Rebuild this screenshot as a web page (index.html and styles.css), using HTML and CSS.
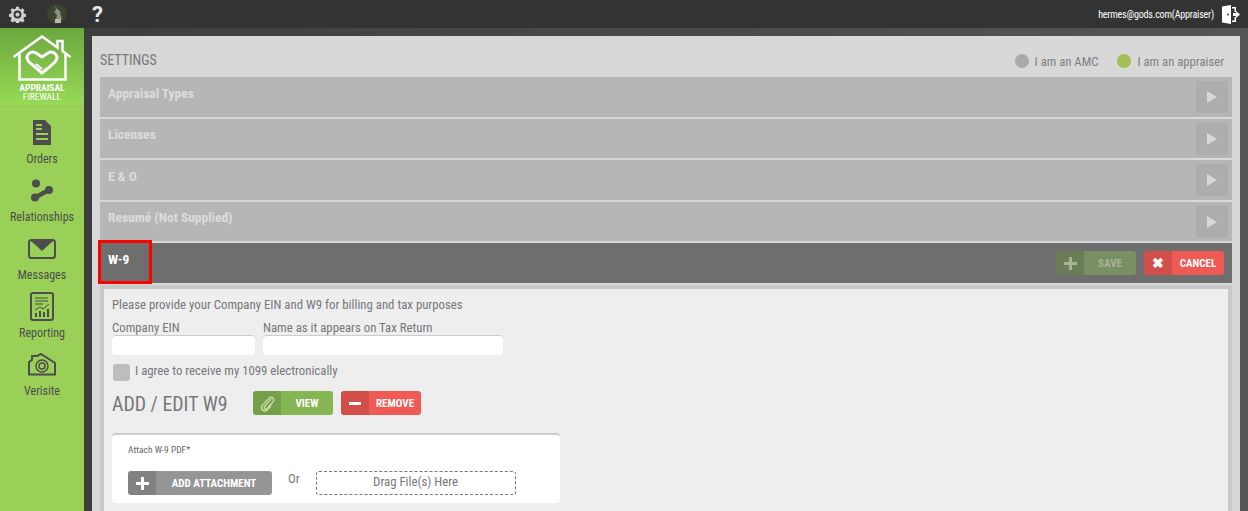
FILE: index.html
```html
<!DOCTYPE html>
<html lang="en">
<head>
    <meta charset="UTF-8">
    <title>Settings</title>
    <link rel="stylesheet" href="styles.css">
</head>
<body>
<header class="topbar">
    <svg class="top-gear" viewBox="0 0 24 24" width="17" height="17"><path fill="#d0d0d0" fill-rule="evenodd" d="M10 1h4l.6 3 2 .9 2.600-1.700 2.800 2.800-1.700 2.600.9 2 3 .6v4l-3 .6-.9 2 1.700 2.600-2.800 2.800-2.600-1.700-2 .9-.6 3h-4l-.6-3-2-.9-2.600 1.700-2.800-2.800 1.700-2.600-.9-2-3-.6v-4l3-.6.9-2L2 5.800 4.800 3l2.600 1.700 2-.9zM12 6.500a5.500 5.500 0 1 0 0 11 5.500 5.500 0 0 0 0-11zm0 2.500a3 3 0 1 1 0 6 3 3 0 0 1 0-6z"/></svg>
    <svg class="top-avatar" viewBox="0 0 20 20" width="20" height="20"><circle cx="10" cy="10" r="10" fill="#3a4630"/><path fill="#8f8f86" d="M8 2l2 3 3 2 1 5 1 3H9l1-4-3-3 2-2z"/><path fill="#b9b9b0" d="M8 15h6v4H8z"/></svg>
    <span class="top-help">?</span>
    <span class="top-user">hermes@gods.com(Appraiser)</span>
    <svg class="top-door" viewBox="0 0 19 19" width="19" height="19"><path fill="#fff" d="M1 1.500L10 0v19l-9-1.500z"/><path fill="#fff" d="M11 2h4v5h-1.500V3.500H11zM11 15.500h2.500V12H15v5h-4z"/><path fill="#fff" d="M19 9.500L15 6v2h-3v3h3v2z"/><circle cx="7" cy="9.500" r="1" fill="#444"/></svg>
</header>
<div class="layout">
    <nav class="sidebar">
        <div class="logo">
            <svg viewBox="0 0 60 46" width="60" height="46" fill="none" stroke="#fff" stroke-width="2.500"><path d="M1.500 22L30 1.500l15.500 11V6h5v10l8 6M7.500 18.500V44.500h46V18.500"/><path d="M36 33L30 38 17 27C12 21 18 15 24 18l6 4 6-4c6-3 12 3 7 9L33 36" stroke-width="3"/><path d="M24 29l6 5" stroke-width="2"/></svg>
            <div class="logo-text"><b>APPRAISAL</b><br>FIREWALL</div>
        </div>
        <a class="nav-item">
            <svg viewBox="0 0 18 25" width="18" height="25"><path fill="#4d4d4d" fill-rule="evenodd" d="M0 0h12l6 6v19H0zM3 4v2h6V4zm0 4v2h6V8zm0 5v2h12v-2zm0 5v2h12v-2z"/></svg>
            <span>Orders</span>
        </a>
        <a class="nav-item">
            <svg viewBox="0 0 24 23" width="24" height="23"><g fill="#4d4d4d"><circle cx="6" cy="4.500" r="4"/><circle cx="19" cy="11" r="4"/><circle cx="5" cy="18.500" r="4"/><path d="M18 9l2 4L6 20.500l-2-4z"/></g></svg>
            <span>Relationships</span>
        </a>
        <a class="nav-item">
            <svg viewBox="0 0 28 20" width="28" height="20"><rect x="1" y="1" width="26" height="18" rx="2.500" fill="none" stroke="#4d4d4d" stroke-width="2"/><path fill="#4d4d4d" d="M2 1h24L14 12z"/></svg>
            <span>Messages</span>
        </a>
        <a class="nav-item">
            <svg viewBox="0 0 24 29" width="24" height="29"><rect x="1" y="1" width="22" height="27" rx="2" fill="none" stroke="#4d4d4d" stroke-width="2"/><path d="M5 6h13M5 9h13M5 12h8M5 18l5-3 3 2 6-5" fill="none" stroke="#4d4d4d"/><path fill="#4d4d4d" d="M5 21h2v4H5zM9 19h2v6H9zM13 20h2v5h-2zM17 17h2v8h-2z"/></svg>
            <span>Reporting</span>
        </a>
        <a class="nav-item">
            <svg viewBox="0 0 28 23" width="28" height="23" fill="none" stroke="#4d4d4d"><path stroke-width="2" d="M1 21.500V9l3-2V3h5l4-2 14 9v11.500z"/><circle cx="14" cy="13" r="6" stroke-width="1.500"/><circle cx="14" cy="13" r="3" stroke-width="1.500"/></svg>
            <span>Verisite</span>
        </a>
    </nav>
    <main class="content">
        <div class="panel">
            <div class="panel-head">
                <h1>SETTINGS</h1>
                <div class="role"><i class="dot"></i>I am an AMC</div>
                <div class="role"><i class="dot dot-on"></i>I am an appraiser</div>
            </div>
            <div class="row"><span>Appraisal Types</span><b class="arrow"></b></div>
            <div class="row"><span>Licenses</span><b class="arrow"></b></div>
            <div class="row"><span>E &amp; O</span><b class="arrow"></b></div>
            <div class="row"><span>Resumé (Not Supplied)</span><b class="arrow"></b></div>
            <div class="row row-open">
                <span>W-9</span>
                <div class="row-actions">
                    <a class="btn btn-save"><i><svg viewBox="0 0 13 13" width="13" height="13"><path fill="currentColor" d="M5 0h3v5h5v3H8v5H5V8H0V5h5z"/></svg></i><em>SAVE</em></a>
                    <a class="btn btn-red"><i>✖</i><em>CANCEL</em></a>
                </div>
                <div class="highlight"></div>
            </div>
            <section class="body-box">
                <p class="intro">Please provide your Company EIN and W9 for billing and tax purposes</p>
                <div class="fields">
                    <label class="field field-ein">Company EIN<input type="text"></label>
                    <label class="field field-name">Name as it appears on Tax Return<input type="text"></label>
                </div>
                <div class="agree"><i class="check"></i>I agree to receive my 1099 electronically</div>
                <div class="w9-head">
                    <h2>ADD / EDIT W9</h2>
                    <a class="btn btn-green"><i><svg viewBox="0 0 16 18" width="15" height="17" fill="none" stroke="#cfe0b0" stroke-width="1.400"><path d="M12 4L5 12c-1.500 2 1 4 2.500 2.500L14 7c2-3-2-6.500-4.500-3.500L2.500 11c-3 4 2.500 8 5.500 4.500L12 11"/></svg></i><em>VIEW</em></a>
                    <a class="btn btn-red"><i class="minus"></i><em>REMOVE</em></a>
                </div>
                <div class="attach-card">
                    <div class="attach-label">Attach W-9 PDF*</div>
                    <div class="attach-row">
                        <a class="btn btn-grey"><i><svg viewBox="0 0 13 13" width="13" height="13"><path fill="currentColor" d="M5 0h3v5h5v3H8v5H5V8H0V5h5z"/></svg></i><em>ADD ATTACHMENT</em></a>
                        <span class="or">Or</span>
                        <div class="dropzone">Drag File(s) Here</div>
                    </div>
                </div>
            </section>
        </div>
    </main>
</div>
</body>
</html>
```
FILE: styles.css
```css
/* page */
html, body {
    height: 100%;
}

body {
    margin: 0;
    overflow: hidden;
    display: flex;
    flex-direction: column;
    background-color: #4a4a4a;
    font-family: "Roboto Condensed", Roboto, sans-serif;
    font-size: 12.800px;
    color: #77777b;
}

/* top bar */
.topbar {
    height: 28px;
    flex: none;
    display: flex;
    align-items: center;
    background-color: #333;
    padding: 0 8px 0 9px;
}

.top-avatar {
    margin-left: 21px;
}

.top-help {
    margin-left: 25px;
    font: bold 22px Roboto, sans-serif;
    color: #e8e8e8;
}

.top-user {
    margin-left: auto;
    font-size: 10px;
    letter-spacing: -0.180px;
    color: #fff;
}

.top-door {
    margin-left: 7px;
}

.layout {
    flex: 1;
    display: flex;
    min-height: 0;
}

/* side nav */
.sidebar {
    width: 84px;
    flex: none;
    background-color: #9ad058;
}

.logo {
    height: 77px;
    box-sizing: border-box;
    padding-top: 7px;
    background: linear-gradient(180deg, #6ba83e, #97da56);
    text-align: center;
    color: #fff;
}

.logo svg {
    display: block;
    margin: 0 auto;
}

.logo-text {
    margin-top: 2px;
    font-size: 9.500px;
    line-height: 9px;
}

.logo-text b {
    font-weight: 700;
}

.nav-item {
    height: 58px;
    box-sizing: border-box;
    padding-top: 5px;
    display: flex;
    flex-direction: column;
    align-items: center;
    color: #4d4d4d;
    font-size: 12px;
}

.nav-item span {
    line-height: 14px;
}

.nav-item svg {
    flex: none;
    margin: auto 0;
}

.sidebar .logo + .nav-item {
    margin-top: 3px;
}

/* main panel */
.content {
    flex: 1;
    min-width: 0;
    padding: 8px 8px 0;
    background: linear-gradient(90deg, #3e3e3e, #555);
}

.panel {
    height: 100%;
    padding: 0 8px;
    background-color: #d8d8d8;
}

.panel-head {
    height: 41px;
    display: flex;
    align-items: center;
    padding-right: 8px;
    gap: 19px;
}

.panel-head h1 {
    margin: 0 auto 0 0;
    font-size: 14px;
    font-weight: 400;
    color: #77777b;
    padding-top: 6px;
}

.role {
    display: flex;
    align-items: center;
    gap: 6px;
    padding-top: 9px;
    font-size: 12.700px;
    color: #808084;
}

.dot {
    width: 14px;
    height: 14px;
    border-radius: 50%;
    background-color: #aaa;
}

.dot-on {
    background-color: #a3bd58;
}

/* accordion rows */
.row {
    position: relative;
    height: 39.500px;
    margin-bottom: 2px;
    display: flex;
    align-items: flex-start;
    padding: 8.500px 4px 0 8px;
    box-sizing: border-box;
    background-color: #b6b6b6;
    color: #dcdcdc;
    font-size: 13.500px;
    font-weight: 700;
}

.row > span {
    line-height: 15px;
}

.arrow {
    position: relative;
    width: 32px;
    height: 32px;
    margin: -4.500px 0 0 auto;
    background-color: #adadad;
}

.arrow::after {
    content: "";
    position: absolute;
    left: 11px;
    top: 10px;
    border-left: 10px solid #d8d8d8;
    border-top: 6px solid transparent;
    border-bottom: 6px solid transparent;
}

.row-open {
    height: 40px;
    margin-bottom: 2px;
    padding-top: 9px;
    padding-right: 8px;
    background-color: #6e6e6e;
    color: #fff;
}

.row-actions {
    margin-left: auto;
    margin-top: -1px;
    display: flex;
    gap: 8px;
}

.highlight {
    position: absolute;
    left: -2px;
    top: -3px;
    width: 54px;
    height: 44px;
    box-sizing: border-box;
    border: 3px solid #f00;
}

/* buttons */
.btn {
    display: flex;
    height: 24px;
    width: 80px;
    flex: none;
    border-radius: 3px;
    overflow: hidden;
    color: #fff;
    font-size: 11px;
    font-weight: 700;
}

.btn i {
    width: 28px;
    flex: none;
    display: flex;
    align-items: center;
    justify-content: center;
    font-style: normal;
    font-size: 14px;
    line-height: 16px;
    background-color: rgba(0, 0, 0, 0.12);
}

.btn em {
    flex: 1;
    padding-top: 2px;
    text-align: center;
    font-style: normal;
    line-height: 22px;
}

.btn-save {
    background-color: #7a8f64;
    color: #a8b39a;
}

.btn-red {
    background-color: #f05a54;
}

.btn-green {
    background-color: #86b553;
}

.btn-grey {
    width: 144px;
    background-color: #959595;
}

.minus::after {
    content: "";
    width: 12px;
    height: 3px;
    background-color: #fff;
}

/* W-9 form */
.body-box {
    min-height: 300px;
    border: 4px solid #c8c8c8;
    border-width: 4px 4px 0;
    background-color: #eee;
    padding: 0 8px;
}

.intro {
    margin: 0;
    padding-top: 8px;
    line-height: 16px;
}

.fields {
    display: flex;
    gap: 8px;
    margin-top: 8px;
}

.field {
    display: flex;
    flex-direction: column;
    line-height: 14px;
}

.field-ein {
    width: 143px;
}

.field-name {
    width: 240px;
}

.field input {
    height: 20px;
    box-sizing: border-box;
    margin: 0;
    padding: 0 4px;
    border: 0;
    border-top: 1px solid #ccc;
    border-radius: 4px;
    background-color: #fff;
}

.agree {
    display: flex;
    align-items: flex-start;
    gap: 5px;
    margin-top: 9px;
    padding-left: 1px;
    line-height: 13px;
}

.check {
    width: 17px;
    height: 17px;
    border-radius: 3px;
    background-color: #bdbdbd;
}

.w9-head {
    display: flex;
    align-items: flex-start;
    gap: 8px;
    height: 24px;
    margin-top: 10px;
}

.w9-head h2 {
    width: 116px;
    margin: 0 17px 0 0;
    height: 24px;
    font-size: 19.800px;
    font-weight: 400;
    line-height: 28px;
    white-space: nowrap;
}

.attach-card {
    width: 448px;
    height: 70px;
    box-sizing: border-box;
    margin-top: 18px;
    padding: 0 16px;
    border-top: 2px solid #ccc;
    border-radius: 4px;
    background-color: #fff;
}

.attach-label {
    padding-top: 9px;
    font-size: 9.500px;
    line-height: 11px;
    color: #666;
}

.attach-row {
    display: flex;
    align-items: flex-start;
    margin-top: 16px;
}

.or {
    margin-left: 16px;
    line-height: 16px;
}

.dropzone {
    width: 200px;
    height: 24px;
    box-sizing: border-box;
    margin-left: 16px;
    border: 1px dashed #777;
    border-radius: 3px;
    text-align: center;
    line-height: 20px;
}
```
